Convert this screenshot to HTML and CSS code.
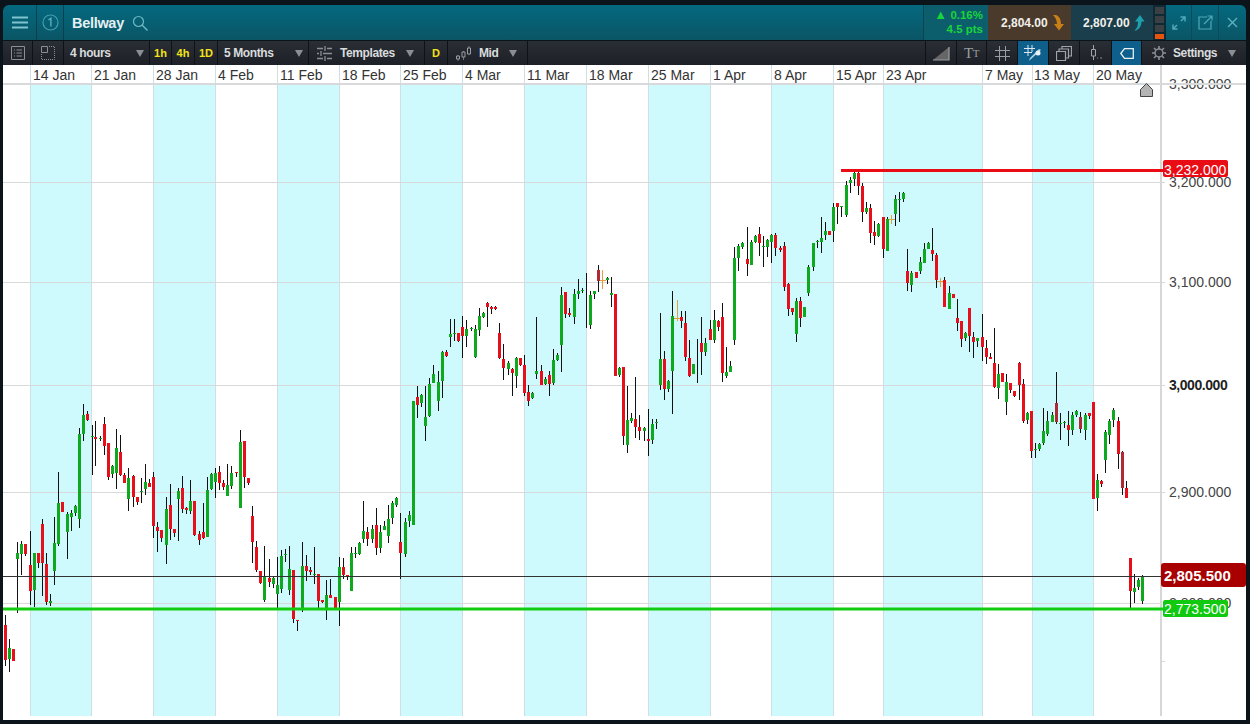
FILE: index.html
```html
<!DOCTYPE html>
<html lang="en">
<head>
<meta charset="utf-8">
<title>Bellway</title>
<link rel="stylesheet" href="styles.css">
</head>
<body>
<div class="app">
  <header class="topbar">
    <button class="tcell menu" aria-label="Menu"><svg width="16" height="13" viewBox="0 0 16 13"><path d="M0 1.500h16M0 6.500h16M0 11.500h16" stroke="#7fc4cf" stroke-width="2"/></svg></button>
    <button class="tcell num" aria-label="Linked 1"><svg width="17" height="17" viewBox="0 0 17 17"><circle cx="8.500" cy="8.500" r="7.500" fill="none" stroke="#3f9fb0" stroke-width="1.200"/><path d="M6.500 6 8.900 4.300V12.500" fill="none" stroke="#5fb5c2" stroke-width="1.300"/></svg></button>
    <div class="title">Bellway</div>
    <svg class="search" width="16" height="16" viewBox="0 0 16 16"><circle cx="6.500" cy="6.500" r="5" fill="none" stroke="#6db8c5" stroke-width="1.200"/><path d="M10.300 10.300 15.500 15.500" stroke="#6db8c5" stroke-width="1.400"/></svg>
    <div class="change"><div><span class="up">▲</span> 0.16%</div><div>4.5 pts</div></div>
    <div class="quote bid"><span>2,804.00</span><svg width="11" height="16" viewBox="0 0 11 16"><path d="M0 0H3C6 1 8 4 8 9H11L6 15.500 1 9H4C4 5 2 2 0 0Z" fill="#c77f16"/></svg></div>
    <div class="quote ask"><span>2,807.00</span><svg width="11" height="16" viewBox="0 0 11 16"><path d="M2 15.500C5.500 14 7.500 11 7.500 6.500H10.500L6 0 1 6.500H4C4 10 3.500 13 .5 15.500Z" fill="#1fa0ad"/></svg></div>
    <div class="depth"><i></i><i></i><i></i><i class="hot"></i></div>
    <button class="tcell act first" aria-label="Expand"><svg width="14" height="14" viewBox="0 0 14 14"><path d="M8.500 1H13V5.500M5.500 13H1V8.500M13 1 9 5M1 13 5 9" fill="none" stroke="#4fa8b8" stroke-width="1.500"/></svg></button>
    <button class="tcell act" aria-label="Pop out"><svg width="15" height="15" viewBox="0 0 15 15"><path d="M9 2H1V14H13V6M6 9 14 1M9.500 1H14V5.500" fill="none" stroke="#4fa8b8" stroke-width="1.200"/></svg></button>
    <button class="tcell act last" aria-label="Close"><svg width="11" height="11" viewBox="0 0 11 11"><path d="M1 1 10 10M10 1 1 10" stroke="#5fb0be" stroke-width="1.400"/></svg></button>
  </header>

  <nav class="toolbar">
    <div class="bcell w30"><svg width="14" height="14" viewBox="0 0 14 14"><path d="M.500.500h13v13H.500zM3 4h1M5.500 4H11M3 7h1M5.500 7H11M3 10h1M5.500 10H11" fill="none" stroke="#8b8f94"/></svg></div>
    <div class="bcell w31"><svg width="14" height="14" viewBox="0 0 14 14"><path d="M.500.500h6v6H.500z" fill="none" stroke="#8b8f94"/><path d="M8 .500h5.500v13H.500V8" fill="none" stroke="#8b8f94" stroke-dasharray="1 1"/></svg></div>
    <div class="bcell sel w86"><span>4 hours</span><b class="arrow"></b></div>
    <div class="bcell y w22">1h</div>
    <div class="bcell y w23">4h</div>
    <div class="bcell y w23">1D</div>
    <div class="bcell sel w91"><span>5 Months</span><b class="arrow"></b></div>
    <div class="bcell sel w116"><svg width="15" height="15" viewBox="0 0 15 15"><path d="M0 2.500h6M10 2.500h5M0 7.500h2M6 7.500h9M0 12.500h6M10 12.500h5M8 0v5M4 5v5M8 10v5" stroke="#8b8f94" fill="none" stroke-width="1.300"/></svg><span>Templates</span><b class="arrow near"></b></div>
    <div class="bcell y w23">D</div>
    <div class="bcell sel w80"><svg width="15" height="15" viewBox="0 0 15 15"><path d="M2 9v6M7.500 5v9M13 0v9" stroke="#777"/><path d="M.500 10h3v3h-3zM6 6h3v5H6zM11.500 2h3v6h-3z" fill="#23272e" stroke="#9a9ea3"/></svg><span>Mid</span><b class="arrow near"></b></div>
    <div class="spacer"></div>
    <div class="bcell w31"><svg width="18" height="15" viewBox="0 0 18 15"><path d="M1 14 17 1V14Z" fill="#666"/><path d="M1 14H17V1" fill="none" stroke="#9a9ea3" stroke-width="1.200"/></svg></div>
    <div class="bcell w30 tt">T<small>T</small></div>
    <div class="bcell w31"><svg width="15" height="15" viewBox="0 0 15 15"><path d="M4.500 0v15M10.500 0v15M0 4.500h15M0 10.500h15" stroke="#9a9ea3"/></svg></div>
    <div class="bcell w31 on"><svg width="18" height="17" viewBox="0 0 18 17"><path d="M4 0v11M8 0v7M0 3.500h11M0 7.500h8" stroke="#dfe8ee" fill="none"/><path d="M17 5 7 14 5 16l1-3 9-9Z" fill="#b9d6e4"/><circle cx="14" cy="8" r="2.500" fill="#e8f2f6"/></svg></div>
    <div class="bcell w31"><svg width="16" height="15" viewBox="0 0 16 15"><path d="M.500 5.500h9v9h-9zM3 5V3h9.500v9H10M6 2.500V.500h9.500V10H13" fill="none" stroke="#a0a4a9" stroke-width="1.200"/></svg></div>
    <div class="bcell w32"><svg width="12" height="16" viewBox="0 0 12 16"><path d="M3.500 0v4M3.500 11v4" stroke="#a0a4a9"/><path d="M1.500 4.500h4v6.500h-4z" fill="none" stroke="#a0a4a9"/><path d="M7 13h1M10 13h2" stroke="#888"/></svg></div>
    <div class="bcell w30 on"><svg width="14" height="11" viewBox="0 0 14 11"><path d="M.800 5.500 4.500.700H13.300V10.300H4.500Z" fill="none" stroke="#e6f0f5" stroke-width="1.300"/></svg></div>
    <div class="bcell sel settings"><svg width="14" height="14" viewBox="0 0 14 14"><circle cx="7" cy="7" r="4" fill="none" stroke="#8b8f94" stroke-width="1.500"/><path d="M7 0v3M7 11v3M0 7h3M11 7h3M2 2l2 2M10 10l2 2M12 2l-2 2M4 10l-2 2" stroke="#8b8f94" stroke-width="1.600"/></svg><span>Settings</span><b class="arrow near"></b></div>
  </nav>

  <main class="chart">
    <svg class="plot" width="1243" height="655" viewBox="3 65 1243 655">
      <g class="bands">
        <rect x="31" y="85" width="60" height="631"/><rect x="154" y="85" width="61" height="631"/><rect x="277" y="85" width="62" height="631"/><rect x="401" y="85" width="61" height="631"/><rect x="525" y="85" width="62" height="631"/><rect x="648" y="85" width="62" height="631"/><rect x="771" y="85" width="62" height="631"/><rect x="883" y="85" width="99" height="631"/><rect x="1032" y="85" width="61" height="631"/>
      </g>
      <path class="vgrid" d="M30.500 65V716M91.500 65V716M153.500 65V716M215.500 65V716M277.500 65V716M339.500 65V716M400.500 65V716M462.500 65V716M524.500 65V716M586.500 65V716M648.500 65V716M710.500 65V716M771.500 65V716M833.500 65V716M883.500 65V716M982.500 65V716M1032.500 65V716M1093.500 65V716"/>
      <path class="hgrid" d="M3 182.500H1161M3 282.500H1161M3 385.500H1161M3 492.500H1161M3 603.500H1161"/>
      <path class="axis" d="M1161 65V716"/>
      <path class="tick" d="M1161 182.500H1165M1161 282.500H1165M1161 385.500H1165M1161 492.500H1165M1161 661.500H1165"/>

      <g class="dates">
        <text x="33" y="80">14 Jan</text><text x="94" y="80">21 Jan</text><text x="156" y="80">28 Jan</text><text x="218" y="80">4 Feb</text><text x="280" y="80">11 Feb</text><text x="342" y="80">18 Feb</text><text x="403" y="80">25 Feb</text><text x="465" y="80">4 Mar</text><text x="527" y="80">11 Mar</text><text x="589" y="80">18 Mar</text><text x="651" y="80">25 Mar</text><text x="713" y="80">1 Apr</text><text x="774" y="80">8 Apr</text><text x="836" y="80">15 Apr</text><text x="886" y="80">23 Apr</text><text x="985" y="80">7 May</text><text x="1034" y="80">13 May</text><text x="1096" y="80">20 May</text>
      </g>
      <g class="prices">
        <text x="1169" y="89">3,300.000</text><text x="1169" y="187">3,200.000</text><text x="1169" y="287">3,100.000</text><text class="major" x="1169" y="390">3,000.000</text><text x="1169" y="497">2,900.000</text><text x="1169" y="608">2,800.000</text>
      </g>
      <path class="hgrid top" d="M3 84H1246"/>

      <path class="wick" d="M5.500 615V666M9.500 639V672M17.500 542V613M21.500 541V575M25.500 544V556M30.500 531V605M34.500 553V607M38.500 553V568M42.500 519V596M46.500 553V605M50.500 594V606M54.500 517V585M58.500 472V546M67.500 512V559M71.500 510V531M75.500 505V516M79.500 428V528M83.500 404V441M87.500 411V421M92.500 425V475M95.500 421V466M100.500 436V441M104.500 417V455M108.500 443V480M112.500 465V478M116.500 429V489M120.500 435V476M124.500 473V483M128.500 468V511M133.500 475V507M137.500 497V505M141.500 478V503M145.500 464V495M149.500 479V487M153.500 472V538M157.500 522V552M161.500 530V542M166.500 497V564M170.500 484V540M174.500 529V537M178.500 488V541M182.500 476V513M186.500 507V514M190.500 480V514M194.500 501V536M199.500 531V545M203.500 503V539M207.500 477V537M211.500 473V490M215.500 468V498M219.500 466V490M223.500 480V490M227.500 464V496M231.500 466V489M236.500 472V477M240.500 430V508M244.500 441V488M248.500 478V485M252.500 506V563M256.500 541V572M260.500 571V584M264.500 546V602M269.500 559V587M273.500 577V588M277.500 557V608M281.500 550V593M285.500 549V562M289.500 546V595M293.500 570V623M297.500 620V631M302.500 542V612M306.500 555V581M310.500 567V575M314.500 547V584M318.500 574V608M322.500 600V603M326.500 580V620M330.500 579V598M339.500 557V626M343.500 558V579M347.500 575V580M351.500 547V591M355.500 547V558M359.500 542V555M363.500 501V543M367.500 527V546M372.500 525V543M376.500 508V555M380.500 525V553M384.500 521V530M388.500 505V543M392.500 501V524M396.500 497V507M400.500 513V579M405.500 518V557M409.500 511V527M417.500 386V418M421.500 394V407M425.500 386V441M429.500 378V417M433.500 365V383M438.500 371V411M442.500 351V398M446.500 350V357M450.500 319V347M454.500 319V341M458.500 333V342M462.500 316V358M466.500 320V347M471.500 327V331M475.500 325V358M479.500 308V336M483.500 312V318M487.500 302V327M491.500 306V314M495.500 306V310M499.500 323V359M503.500 344V380M508.500 361V375M512.500 368V396M516.500 357V388M520.500 358V366M524.500 355V396M528.500 385V406M532.500 392V399M536.500 317V379M541.500 365V385M545.500 377V385M549.500 371V396M553.500 349V385M557.500 353V361M561.500 287V372M565.500 292V318M569.500 308V317M574.500 289V324M578.500 279V299M582.500 288V293M586.500 273V328M590.500 291V329M594.500 291V299M598.500 265V292M607.500 277V284M611.500 277V307M619.500 367V377M623.500 367V445M627.500 386V453M631.500 413V423M635.500 377V438M639.500 415V440M644.500 427V441M648.500 409V456M652.500 419V444M656.500 419V429M660.500 313V390M664.500 351V400M668.500 380V392M672.500 291V414M681.500 311V328M685.500 311V361M689.500 340V377M697.500 339V383M701.500 317V375M705.500 338V356M710.500 320V340M714.500 310V343M718.500 320V331M722.500 303V382M726.500 347V378M730.500 361V372M734.500 247V345M738.500 244V271M742.500 242V249M747.500 227V276M751.500 240V265M755.500 235V243M759.500 227V256M763.500 236V267M767.500 239V257M771.500 234V263M775.500 233V256M780.500 246V252M784.500 242V291M788.500 283V316M792.500 308V315M796.500 298V342M800.500 297V327M808.500 265V296M813.500 243V271M817.500 240V248M821.500 217V253M825.500 222V240M833.500 203V242M837.500 203V224M841.500 206V217M846.500 181V217M850.500 177V193M854.500 172V186M858.500 172V195M862.500 183V222M866.500 202V214M870.500 204V243M874.500 221V245M878.500 223V237M883.500 217V258M887.500 217V251M895.500 195V226M899.500 192V222M903.500 192V202M907.500 249V291M911.500 271V292M920.500 257V274M924.500 243V263M928.500 242V249M932.500 228V261M936.500 253V288M944.500 277V307M949.500 286V309M957.500 299V331M961.500 322V347M965.500 332V341M969.500 308V352M973.500 332V358M977.500 338V347M982.500 314V361M986.500 340V364M990.500 353V359M994.500 328V388M998.500 364V399M1002.500 373V382M1006.500 374V415M1010.500 383V393M1014.500 391V397M1019.500 362V400M1023.500 379V423M1027.500 412V424M1031.500 411V458M1035.500 443V458M1039.500 443V451M1043.500 408V445M1047.500 411V436M1052.500 412V422M1056.500 372V424M1060.500 413V440M1064.500 421V428M1068.500 411V446M1072.500 412V435M1076.500 410V417M1080.500 412V433M1085.500 413V440M1089.500 413V419M1097.500 474V511M1101.500 480V487M1105.500 430V473M1109.500 419V444M1113.500 408V427M1118.500 417V469M1122.500 451V495M1126.500 481V498M1130.500 591V608M1134.500 574V603M1138.500 578V590M1142.500 575V604"/>

      <path class="wick orange" d="M602.500 270V289M677.500 300V321M891.500 215V224M940.500 278V287"/>
      <path class="tickmark orange" d="M599 280.500H606M674 318.500H681M888 219.500H895M937 281.500H944"/>

      <path class="body red" d="M5.500 625V660M13.500 649V661M25.500 544V554M30.500 565V591M38.500 553V563M42.500 524V563M46.500 564V602M62.500 502V512M87.500 414V420M95.500 437V439M104.500 424V446M108.500 443V477M120.500 452V475M124.500 475V483M133.500 476V497M137.500 497V502M149.500 483V487M153.500 477V526M157.500 527V531M161.500 530V538M170.500 505V529M174.500 529V533M182.500 488V509M186.500 508V510M194.500 501V535M199.500 534V540M203.500 532V538M219.500 472V483M223.500 483V487M236.500 472V473M244.500 441V477M248.500 478V483M252.500 516V542M256.500 547V570M260.500 571V583M269.500 578V582M293.500 570V619M297.500 620V621M306.500 566V571M310.500 570V572M318.500 574V601M322.500 600V602M330.500 595V598M335.500 597V610M343.500 567V575M347.500 575V577M367.500 532V539M376.500 525V548M400.500 542V553M417.500 397V405M446.500 352V356M458.500 333V341M462.500 327V336M487.500 303V307M491.500 307V309M495.500 307V309M499.500 333V358M503.500 359V368M512.500 369V373M520.500 358V365M524.500 365V393M528.500 392V401M541.500 371V385M549.500 375V384M565.500 292V314M569.500 313V315M615.500 294V376M623.500 367V436M635.500 419V427M639.500 427V431M648.500 439V441M664.500 359V389M681.500 317V321M685.500 323V357M689.500 358V376M701.500 343V352M710.500 329V340M718.500 321V327M722.500 317V373M747.500 259V264M759.500 234V243M775.500 235V248M780.500 248V250M784.500 246V287M788.500 284V309M792.500 308V312M800.500 301V318M829.500 231V235M837.500 203V207M858.500 173V186M862.500 186V212M870.500 208V233M874.500 232V236M883.500 217V249M907.500 271V283M916.500 272V278M932.500 250V254M936.500 255V280M944.500 280V307M953.500 294V298M957.500 318V323M961.500 321V339M969.500 308V336M973.500 337V342M982.500 337V347M986.500 348V357M990.500 357V359M994.500 363V387M1002.500 373V382M1010.500 383V390M1014.500 391V396M1019.500 363V385M1023.500 384V421M1031.500 411V451M1068.500 425V430M1089.500 413V416M1093.500 402V499M1101.500 481V484M1118.500 421V454M1126.500 488V498M1130.500 558V591"/>
      <path class="body dark" d="M598.500 270V281M1056.500 403V422M1080.500 417V429M1122.500 452V488"/>
      <path class="body green" d="M9.500 648V659M17.500 553V559M21.500 544V554M34.500 553V590M50.500 601V603M54.500 543V571M58.500 503V544M67.500 514V532M71.500 513V517M75.500 506V513M79.500 434V519M83.500 415V434M92.500 436V437M100.500 438V439M112.500 466V474M116.500 448V473M128.500 478V499M141.500 491V492M145.500 482V489M166.500 509V545M178.500 491V499M190.500 501V511M207.500 490V537M211.500 474V489M215.500 473V482M227.500 485V496M231.500 473V486M240.500 442V508M264.500 577V600M273.500 578V584M277.500 585V594M281.500 556V589M285.500 554V555M289.500 569V590M302.500 566V610M314.500 574V575M326.500 595V610M339.500 567V602M351.500 553V591M355.500 553V554M359.500 543V554M363.500 531V539M372.500 529V539M380.500 532V548M384.500 526V530M388.500 519V536M392.500 503V518M396.500 498V505M405.500 522V554M409.500 515V521M413.500 401V525M421.500 395V403M425.500 417V426M429.500 384V416M433.500 374V383M438.500 382V401M442.500 352V381M450.500 334V337M454.500 333V334M466.500 329V336M471.500 328V329M475.500 329V357M479.500 316V330M483.500 313V317M508.500 363V369M516.500 358V376M532.500 393V398M536.500 371V374M545.500 379V384M553.500 360V383M557.500 355V360M561.500 295V345M574.500 294V317M578.500 291V294M582.500 290V291M590.500 295V325M594.500 291V294M607.500 278V280M611.500 293V295M619.500 368V375M627.500 420V445M631.500 418V421M644.500 428V431M652.500 424V440M656.500 422V423M660.500 359V385M668.500 381V389M672.500 316V371M693.500 364V374M705.500 343V352M714.500 320V340M726.500 372V376M730.500 366V372M734.500 258V340M738.500 246V258M742.500 243V247M751.500 242V265M755.500 236V242M763.500 246V247M767.500 240V247M771.500 235V242M796.500 301V334M804.500 307V317M808.500 267V293M813.500 243V267M817.500 241V242M821.500 238V242M825.500 231V235M833.500 207V231M841.500 206V207M846.500 185V215M850.500 180V183M854.500 173V179M866.500 208V212M878.500 224V236M887.500 219V251M895.500 199V214M899.500 199V200M903.500 193V199M911.500 273V285M920.500 262V271M924.500 249V263M928.500 243V249M949.500 293V309M965.500 333V338M977.500 338V341M998.500 374V388M1006.500 382V402M1027.500 413V420M1035.500 449V450M1039.500 444V449M1043.500 431V443M1047.500 421V434M1052.500 415V422M1060.500 423V424M1064.500 422V423M1072.500 415V430M1076.500 411V415M1085.500 415V430M1097.500 480V498M1105.500 432V460M1109.500 421V435M1113.500 410V420M1134.500 588V592M1138.500 580V587M1142.500 577V601"/>

      <path class="level price" d="M3 576.500H1161"/>
      <path class="level lo" d="M3 609H1163"/>
      <path class="level hi" d="M841 170.500H1163"/>
      <path class="home" d="M1140.500 89.500 1146.500 83.500 1152.500 89.500V96.500H1140.500Z"/>

      <rect class="tag hi" x="1163" y="160" width="65" height="17" rx="2"/>
      <text class="tagtext" x="1164" y="175">3,232.000</text>
      <rect class="tag lo" x="1163" y="600" width="65" height="17" rx="2"/>
      <text class="tagtext" x="1164" y="614">2,773.500</text>
      <rect class="tag now" x="1161" y="563" width="85" height="24" rx="3"/>
      <text class="tagtext bold" x="1164" y="581">2,805.500</text>
    </svg>
  </main>
</div>
</body>
</html>
```
FILE: styles.css
```css
* { box-sizing: border-box; }
html, body { margin: 0; height: 100%; }
body {
  background: #0b141b;
  font-family: "Liberation Sans", Arial, sans-serif;
  overflow: hidden;
}
.app {
  display: flex;
  flex-direction: column;
  height: 724px;
  padding: 5px 4px 4px 3px;
}
.topbar {
  display: flex;
  align-items: stretch;
  height: 35px;
  border-radius: 6px 6px 0 0;
  background: linear-gradient(#04697f, #0a5565);
  overflow: hidden;
  flex: none;
}
.tcell {
  display: flex;
  align-items: center;
  justify-content: center;
  padding: 0;
  border: 0;
  background: none;
  border-right: 1px solid #0a3f4d;
}
.menu { width: 34px; }
.num { width: 27px; }
.title {
  align-self: center;
  margin-left: 8px;
  color: #e4f0f3;
  font-size: 14.500px;
  font-weight: 700;
  letter-spacing: -0.3px;
}
.search { align-self: center; margin-left: 8px; }
.change {
  margin-left: auto;
  width: 65px;
  padding: 3px 5px 0 0;
  text-align: right;
  font-size: 11.500px;
  font-weight: 700;
  line-height: 14px;
  color: #19d43a;
  background: #0d5e6d;
  border-left: 1px solid #0a4552;
}
.up { font-size: 13px; line-height: 12px; }
.quote {
  display: flex;
  align-items: center;
  color: #f0f0ea;
  font-size: 12px;
  font-weight: 700;
}
.bid { width: 83px; padding-left: 13px; gap: 5px; background: #4a3a2b; }
.ask { width: 82px; padding-left: 12px; gap: 4px; background: #1b3e4c; }
.depth {
  display: flex;
  flex-direction: column;
  gap: 2px;
  width: 13px;
  padding: 2px 2px 0;
  background: #0f2a35;
}
.depth i { display: block; height: 7px; background: #3b4045; }
.depth i.hot { height: 5px; background: #e8530e; }
.act { width: 27px; border-right: 1px solid #0a4a59; }
.act.first { width: 26px; }
.act.last { border-right: 0; }

.toolbar {
  display: flex;
  height: 24px;
  margin-top: 1px;
  background: linear-gradient(#2a2e35, #1d2026);
  color: #d9dbdd;
  font-size: 12px;
  font-weight: 700;
  flex: none;
}
.bcell {
  display: flex;
  align-items: center;
  justify-content: center;
  height: 100%;
  border-right: 1px solid #0e1115;
  letter-spacing: -0.4px;
}
.w22 { width: 22px; }
.w23 { width: 23px; }
.w30 { width: 30px; }
.w31 { width: 31px; }
.w32 { width: 32px; }
.w80 { width: 80px; }
.w86 { width: 86px; }
.w91 { width: 91px; }
.w116 { width: 116px; }
.y { color: #f2e21a; font-size: 11px; letter-spacing: 0; }
.sel { justify-content: flex-start; padding-left: 6px; }
.sel svg { margin: 0 8px 0 2px; }
.arrow {
  width: 0;
  height: 0;
  margin-left: auto;
  margin-right: 5px;
  border-left: 4px solid transparent;
  border-right: 4px solid transparent;
  border-top: 7px solid #8b8f94;
}
.arrow.near { margin-left: 11px; margin-right: 0; }
.spacer { flex: 1; border-right: 1px solid #0e1115; }
.tt { color: #9a9ea3; font-family: "Liberation Serif", serif; font-size: 15px; font-weight: 400; }
.tt small { font-size: 11px; }
.on { background: #0f5f8c; }
.settings { width: 104px; padding-left: 10px; border-right: 0; flex: none; }
.settings svg { margin: 0 7px 0 0; }

.chart {
  flex: 1;
  min-height: 0;
  background: #fff;
}
.plot { display: block; }
.bands rect { fill: #cffafd; }
.vgrid { stroke: #d0dfe3; stroke-width: 1; fill: none; }
.hgrid { stroke: #d7d9da; stroke-width: 1; fill: none; }
.hgrid.top { stroke-width: 2; }
.axis { stroke: #d7d7d7; stroke-width: 2; fill: none; }
.tick { stroke: #d7d7d7; fill: none; }
.dates text { font-size: 14px; fill: #333; }
.prices text { font-size: 14px; fill: #444; }
.prices .major { fill: #222; font-weight: 700; letter-spacing: -0.45px; }
.wick { stroke: #111; stroke-width: 1; fill: none; }
.wick.orange { stroke: #e0a040; }
.tickmark.orange { stroke: #e0a040; stroke-width: 1; fill: none; }
.body { stroke-width: 3; fill: none; }
.body.red { stroke: #e5101c; }
.body.dark { stroke: #b02a35; }
.body.green { stroke: #0fa91f; }
.level { fill: none; }
.level.price { stroke: #333; stroke-width: 1; }
.level.lo { stroke: #12cc12; stroke-width: 3; }
.level.hi { stroke: #ea0c14; stroke-width: 3; }
.home { fill: #b4b4b4; stroke: #444; stroke-width: 1; }
.tag.hi { fill: #ea0c14; }
.tag.lo { fill: #12c912; }
.tag.now { fill: #a80000; }
.tagtext { font-size: 14px; fill: #fff; }
.tagtext.bold { font-size: 15px; font-weight: 700; }
```
